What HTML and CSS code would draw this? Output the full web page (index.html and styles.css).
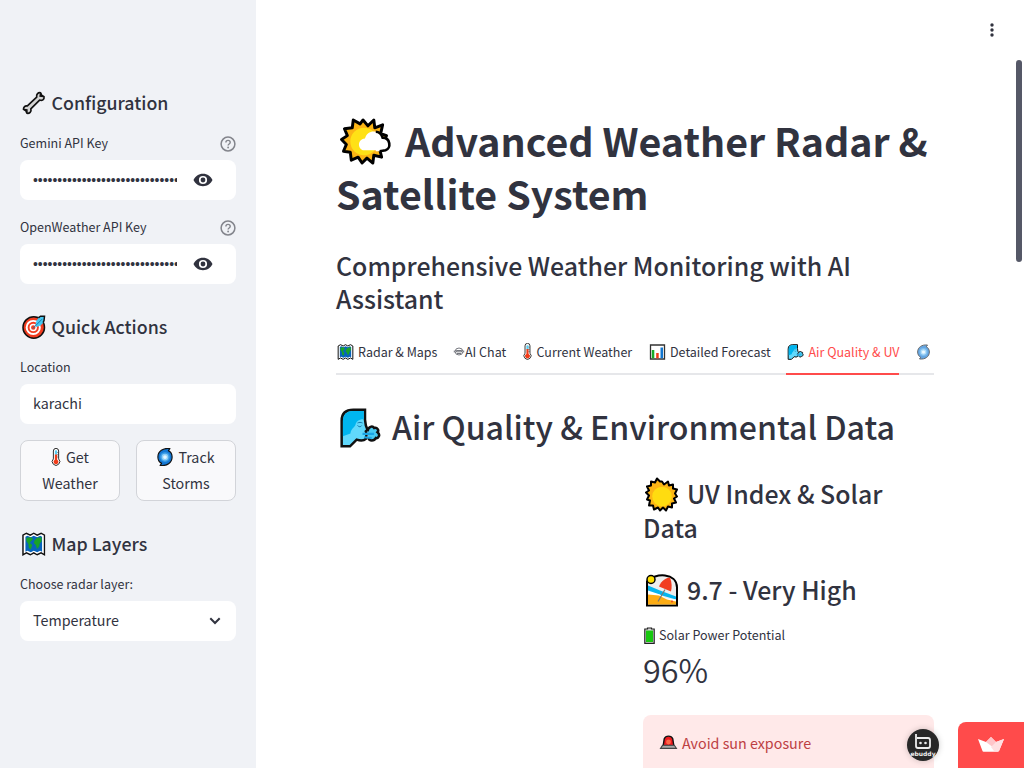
FILE: index.html
```html
<!DOCTYPE html>
<html lang="en">
<head>
<meta charset="utf-8">
<title>Advanced Weather Radar &amp; Satellite System</title>
<link rel="stylesheet" href="styles.css">
</head>
<body>
<svg class="sprite" aria-hidden="true">
  <symbol id="map" viewBox="0 0 48 48">
    <path d="M2 6 9 2l8 4 7-4 7 4 8-4 7 4v40l-7-4-8 4-7-4-7 4-8-4-7 4Z" fill="#fff" stroke="#111" stroke-width="3"/>
    <path d="m7 9 4-2 7 3 6-3 7 3 6-3 4 2v31l-4-2-6 3-7-3-6 3-7-3-4 2Z" fill="#0864bc"/>
    <path d="m9 11 9-1 5 4-4 4-3 4 5 4-3 9-4-3-1-8-4-6ZM26 16l5-5 9-1v9l-4 4-1 6-4 5-3-8-4-4Z" fill="#18a329"/>
  </symbol>
  <symbol id="thermo" viewBox="0 0 24 48">
    <path d="M5 8a7 7 0 0 1 14 0v21a10 10 0 1 1-14 0Z" fill="#fff" stroke="#222" stroke-width="2.500"/>
    <path d="M9 9a3 3 0 0 1 6 0v9H9Z" fill="#5bcdf0"/>
    <path d="M9 17h6v14a6.500 6.500 0 1 1-6 0Z" fill="#f03a17"/>
    <path d="M18 12h-3m3 6h-3m3 6h-3" stroke="#111" stroke-width="1.200"/>
  </symbol>
  <symbol id="cyclone" viewBox="3 0 42 48">
    <path d="M37 1.500C19-1 5 9 5 24c0 8 4 14 10 17l-4 5.500C29 49 43 39 43 24c0-8-4-14-10-17Z" fill="#1478d4" stroke="#111" stroke-width="3" stroke-linejoin="round"/>
    <circle cx="24" cy="24" r="13" fill="#3c9de6"/><circle cx="24" cy="24" r="9" fill="#8fd0f7"/><circle cx="24" cy="24" r="5" fill="#e6f7ff"/>
  </symbol>
  <symbol id="wind" viewBox="0 0 48 48">
    <path d="M2 46V15C2 6 7 2 16 2h14v12l1 7 2 5-2 2 1 3-1 6c-3 3-8 2-11 1l-8 8Z" fill="#61d9fc" stroke="#111" stroke-width="3"/>
    <path d="M3.500 34V15c0-7 5-11.500 12-11.500h13v10c-7 0-9 3-10 7-2 4-5 4-6 10Z" fill="#00b5ef"/>
    <path d="M33 28c1-6 6-7 8-4 4-1 6 3 4 5 4 3 1 8-2 7-2 4-8 4-9 0" fill="#48cbf2" stroke="#111" stroke-width="3"/>
    <path d="M27 31h14m-12 4 9 1" stroke="#1ba5e5" stroke-width="2.500"/>
    <path d="M21 18c2-1 4-1 6 0m-6 3c2 2 4 2 5 0" fill="none" stroke="#1678ab" stroke-width="1.200"/>
  </symbol>
  <symbol id="eye" viewBox="0 0 20 14">
    <path fill-rule="evenodd" d="M10 .8c4.400 0 7.900 2.600 9.500 6.200-1.600 3.600-5.100 6.200-9.500 6.200S2.100 10.600.5 7C2.100 3.400 5.600.8 10 .8Zm0 2.100a4.100 4.100 0 1 0 0 8.200 4.100 4.100 0 0 0 0-8.200Z" fill="#31333f"/><circle cx="10" cy="7" r="2.400" fill="#31333f"/>
  </symbol>
  <symbol id="help" viewBox="0 0 16 16">
    <circle cx="8" cy="8" r="6.900" fill="none" stroke="#83858c" stroke-width="1.500"/>
    <path d="M5.900 6.500c0-2.800 4.300-2.800 4.300 0 0 1.500-2.100 1.500-2.100 3" fill="none" stroke="#83858c" stroke-width="1.400"/><circle cx="8.100" cy="11.500" r=".9" fill="#83858c"/>
  </symbol>
</svg>
<div class="app">
  <aside class="sidebar">
    <h2 class="side-title"><svg class="side-icon" viewBox="0 0 48 48"><path d="m11 30 19-18c-1-6 3-10 8-9l2 5 5 3c1 6-4 9-9 7L18 36c2 6-3 10-8 9l-2-5-5-3c0-5 3-8 8-7Z" fill="#d4d4d4" stroke="#111" stroke-width="3.400" stroke-linejoin="round"/><path d="m38 4-1 6 7 1M4 37l6 1v6" fill="none" stroke="#111" stroke-width="3"/></svg><span>Configuration</span></h2>
    <div class="field">
      <div class="label"><span>Gemini API Key</span><svg class="help"><use href="#help"/></svg></div>
      <div class="input"><span class="dots">••••••••••••••••••••••••••••••</span><svg class="eye"><use href="#eye"/></svg></div>
    </div>
    <div class="field">
      <div class="label"><span>OpenWeather API Key</span><svg class="help"><use href="#help"/></svg></div>
      <div class="input"><span class="dots">••••••••••••••••••••••••••••••</span><svg class="eye"><use href="#eye"/></svg></div>
    </div>
    <h2 class="side-title later"><svg class="side-icon" viewBox="0 0 48 48"><circle cx="24" cy="25" r="22" fill="#f23d20" stroke="#111" stroke-width="3"/><circle cx="23" cy="25" r="13.500" fill="none" stroke="#fff" stroke-width="4"/><circle cx="23" cy="25" r="6" fill="#f23d20" stroke="#fff" stroke-width="3"/><path d="m27 21 3-11 5-6 11-1-1 11-7 7-9 3Z" fill="#45c8f2"/><path d="m22 27 19-19" stroke="#137bae" stroke-width="2"/><path d="m34 5 4-3h8l-1 9-2 4" fill="none" stroke="#111" stroke-width="3"/></svg><span>Quick Actions</span></h2>
    <div class="field">
      <div class="label"><span>Location</span></div>
      <div class="input"><span class="value">karachi</span></div>
    </div>
    <div class="actions">
      <button class="action"><span class="action-line"><svg class="thermo-btn"><use href="#thermo"/></svg>Get</span><span>Weather</span></button>
      <button class="action"><span class="action-line"><svg class="cyclone-btn"><use href="#cyclone"/></svg>Track</span><span>Storms</span></button>
    </div>
    <h2 class="side-title later"><svg class="side-icon"><use href="#map"/></svg><span>Map Layers</span></h2>
    <div class="field">
      <div class="label"><span>Choose radar layer:</span></div>
      <div class="input"><span class="value">Temperature</span><svg class="chevron" viewBox="0 0 12 8"><path d="m1.300 1.300 4.700 4.700 4.700-4.700" fill="none" stroke="#31333f" stroke-width="2"/></svg></div>
    </div>
  </aside>
  <main class="main">
    <h1 class="title"><svg class="sun-cloud" viewBox="0 0 50 48"><path d="m23 2 5 6 6-6 1 8 8-3-2 9 6 2-3 6 4 6-8 2 2 8-8-2-1 8-6-5-5 5-4-6-7 3-1-8-7-1 3-7-5-5 6-4-3-7 8-1 1-8 7 4Z" fill="#fcb515" stroke="#000" stroke-width="3" stroke-linejoin="round"/><path d="M36 14c5 0 7 3 8 6 7 0 10 12 0 14h-8Z" fill="#fff"/><circle cx="24" cy="24" r="14" fill="#ffe116"/><path d="M24 33c-6 0-8-11 1-12 2-9 14-10 17-1 9-1 10 13 2 13Z" fill="#fff"/><path d="M36 14c4 0 6 3 7 6 8 0 9 11 3 13l-6 1" fill="none" stroke="#000" stroke-width="2.700"/></svg><span>Advanced Weather Radar &amp;</span><br><span>Satellite System</span></h1>
    <h3 class="subtitle"><span>Comprehensive Weather Monitoring with AI</span><br>Assistant</h3>
    <nav class="tabs">
      <a class="tab tab-radar"><svg class="tab-icon"><use href="#map"/></svg><span>Radar &amp; Maps</span></a>
      <a class="tab tab-chat"><svg class="chat-icon" viewBox="0 0 10 9"><ellipse cx="5" cy="4.500" rx="3.800" ry="3.500" fill="none" stroke="#52545d" stroke-width=".8"/><path d="M.3 3.500v2m9.400-2v2M2.500 3.500h5v1.300h-5ZM3 6.500h4" fill="none" stroke="#52545d" stroke-width=".8"/></svg><span>AI Chat</span></a>
      <a class="tab tab-current"><svg class="tab-thermo"><use href="#thermo"/></svg><span>Current Weather</span></a>
      <a class="tab tab-forecast"><svg class="tab-icon" viewBox="0 0 16 16"><path d="M1 1h14v14H1Z" fill="#fff" stroke="#333" stroke-width="1.300"/><path d="M2.300 6h2.500v8.300H2.300Z" fill="#18ab28"/><path d="M6.700 9h2.500v5.300H6.700Z" fill="#f03a17"/><path d="M11 3.500h2.500v10.800H11Z" fill="#1277d1"/></svg><span>Detailed Forecast</span></a>
      <a class="tab tab-air active"><svg class="tab-icon"><use href="#wind"/></svg><span>Air Quality &amp; UV</span></a>
      <a class="tab tab-storm"><svg class="tab-storm-icon"><use href="#cyclone"/></svg></a>
    </nav>
    <h2 class="section"><svg class="section-icon"><use href="#wind"/></svg><span>Air Quality &amp; Environmental Data</span></h2>
    <section class="uv">
      <h3 class="uv-title"><svg class="uv-icon sun" viewBox="0 0 32 32"><path d="m16 1 2 3 4-3 1 4 4-1v4l4 1-2 4 2 3-3 2 2 4-4 1v4l-4-1-2 4-3-3-3 3-2-3-4 2-1-4-4 0 1-5-3-1 2-4-3-3 3-2-2-4 4-1 0-4 4 1 2-4 3 3Z" fill="#fcb515" stroke="#000" stroke-width="2" stroke-linejoin="round"/><circle cx="16" cy="16" r="9.800" fill="#ffdc10"/></svg><span>UV Index &amp; Solar</span><br>Data</h3>
      <h3 class="uv-title score"><svg class="uv-icon" viewBox="0 0 32 32"><path d="M1 31V7C9-2 31-2 31 13v18Z" fill="#eee" stroke="#000" stroke-width="2"/><path d="m2 11 12 5 16 6v3L2 17Z" fill="#05b5ef"/><path d="m2 16 12 4 6 4 10 1v3H2Z" fill="#fff"/><path d="m2 20 11 1 8 4 9 2v3H2Z" fill="#fcac14"/><path d="m13 12c2-6 8-9 11-9 2 5 2 10 1 14Z" fill="#f13d21"/><path d="m19 15-7 12" stroke="#777" stroke-width="1.200"/><circle cx="5" cy="5" r="4" fill="#ffe000" stroke="#000" stroke-width="1.500"/><circle cx="26" cy="27" r="1" fill="#ef4323"/></svg><span>9.7 - Very High</span></h3>
      <div class="metric-label"><svg class="battery" viewBox="0 0 11 17"><path d="M3.500 1h4v1h2.700v14.300H.8V2h2.700Z" fill="#d9d9d9" stroke="#222" stroke-width="1.200"/><path d="M2 3.500h7V15H2Z" fill="#18c80f"/></svg><span>Solar Power Potential</span></div>
      <div class="metric">96%</div>
      <div class="alert"><svg class="siren" viewBox="0 0 16 14"><path d="M3 10 4 3.500Q5 1 8 1t4 2.500l1 6.500Z" fill="#ee1b20" stroke="#111" stroke-width="1.300"/><path d="m2.500 9.500-2 3h15l-2-3Z" fill="#aaa" stroke="#444"/><circle cx="8" cy="6.500" r="2.300" fill="#ff6848"/></svg><span>Avoid sun exposure</span></div>
    </section>
  </main>
  <svg class="menu" viewBox="0 0 4 14"><circle cx="2" cy="2" r="1.700"/><circle cx="2" cy="7" r="1.700"/><circle cx="2" cy="12" r="1.700"/></svg>
  <div class="scroll-thumb"></div>
  <div class="avatar"><svg class="avatar-face" viewBox="0 0 20 16"><path d="M3 .5v12q0 2 2 2h10q2 0 2-2v-6q0-2-2-2H4" fill="none" stroke="#eee" stroke-width="1.800"/><circle cx="7.500" cy="9.500" r="1.300" fill="#eee"/><circle cx="12.500" cy="9.500" r="1.300" fill="#eee"/></svg><span>ebuddy</span></div>
  <div class="host"><svg class="crown" viewBox="0 0 26 15"><path d="m0 2 8 3 5-5 5 5 8-3-5 12q-.3.700-1 .7H5.500q-.8 0-1-.7Z" fill="#fff"/><path d="m8 5 5-5 5 5-2 6Z" fill="#ffc5c9"/><path d="m18 5 8-3-5 12H16l-3-4Z" fill="#ffdfe1"/></svg></div>
</div>
</body>
</html>
```
FILE: styles.css
```css
* { box-sizing: border-box; }
body { margin: 0; font-family: "Noto Sans CJK SC", "Noto Sans", sans-serif; color: #31333f; background: #fff; }
.sprite { display: none; }
svg { flex: none; overflow: visible; }
h1, h2, h3 { margin: 0; font-weight: 500; }
span { white-space: nowrap; }
.app { position: relative; display: flex; width: 1024px; height: 768px; overflow: hidden; }
.sidebar { width: 256px; flex: none; background: #f0f2f6; padding: 91px 20px 0; }
.side-title { display: flex; align-items: center; gap: 6px; height: 24px; margin-bottom: 17px; padding-left: 2px; font-size: 17.8px; line-height: 24px; }
.side-title span { padding-bottom: 2px; }
.side-title.later { margin-top: 31px; }
.side-icon { width: 23.5px; height: 24px; }
.field { margin-bottom: 16px; }
.label { display: flex; justify-content: space-between; align-items: center; height: 22px; margin-bottom: 6px; font-size: 12.53px; line-height: 22px; }
.help { width: 16px; height: 16px; margin-top: 2px; }
.input { display: flex; align-items: center; justify-content: space-between; height: 40px; padding: 0 15px 0 13px; border-radius: 8px; background: #fff; font-size: 14.3px; line-height: 24px; }
.value { padding-bottom: 2px; }
.dots { width: 144px; overflow: hidden; font-family: "Liberation Sans", sans-serif; font-size: 13.9px; }
.eye { width: 20px; height: 14px; margin-right: 8px; }
.chevron { width: 12px; height: 8px; }
.actions { display: flex; gap: 16px; }
.action { display: flex; flex-direction: column; align-items: center; justify-content: center; width: 100px; height: 61px; padding: 0 0 2px; border: 1px solid #d2d4d9; border-radius: 8px; background: #f9f9fb; color: inherit; font: 14.3px/26px "Noto Sans CJK SC", sans-serif; }
.action-line { display: flex; align-items: center; gap: 5px; }
.thermo-btn { width: 10px; height: 18px; }
.cyclone-btn { width: 16px; height: 18px; margin-top: 1px; }
.main { width: 598px; margin-left: 80px; padding-top: 113px; }
.title { height: 109px; font-size: 39.36px; line-height: 53px; font-weight: 700; }
.sun-cloud { width: 50px; height: 47px; margin: 0 15px 0 4px; vertical-align: -8px; }
.subtitle { height: 67px; margin-top: 27px; font-size: 24.9px; line-height: 33px; }
.tabs { display: flex; height: 40px; margin-top: 19px; border-bottom: 2px solid #e6e7ea; font-size: 12.5px; line-height: 32px; }
.tab { display: flex; align-items: center; height: 40px; gap: 5px; flex: none; margin-right: 16px; padding-bottom: 7px; }
.tab-radar { width: 102px; padding-left: 1px; gap: 4px; }
.tab-chat { width: 53px; gap: 1px; }
.tab-current { width: 110px; gap: 4.5px; }
.tab-forecast { width: 121px; gap: 4px; }
.tab-air { width: 113px; padding-left: 1px; gap: 4.5px; padding-bottom: 5px; }
.tab-storm { padding-left: 2px; }
.active { color: #ff4b4b; border-bottom: 2px solid #ff4b4b; }
.tab-icon { width: 17px; height: 16px; }
.chat-icon { width: 10px; height: 9px; }
.tab-thermo { width: 9px; height: 17px; }
.tab-storm-icon { width: 13px; height: 16px; opacity: .65; }
.section { display: flex; align-items: center; gap: 11px; height: 44px; margin-top: 31px; padding-left: 3px; font-size: 32.1px; line-height: 44px; }
.section span { padding-bottom: 4px; }
.section-icon { width: 42px; height: 40px; }
.uv { width: 291px; margin: 26px 0 0 307px; }
.uv-title { font-size: 24.9px; line-height: 34px; }
.uv-icon { width: 32px; height: 33px; margin: -6px 9px -6px 3px; vertical-align: -1px; }
.uv-icon.sun { vertical-align: -3px; margin-bottom: -6px; }
.score { margin-top: 28px; }
.metric-label { display: flex; align-items: center; gap: 4px; height: 20px; margin-top: 19px; padding-left: 1px; font-size: 12.55px; line-height: 20px; }
.battery { width: 11px; height: 17px; }
.metric { height: 50px; font-size: 32.4px; line-height: 48px; font-weight: 350; }
.alert { display: flex; align-items: center; gap: 5px; height: 80px; margin-top: 20px; padding: 0 17px 25px; border-radius: 8px; background: #ffe9e9; color: #bd4043; font-size: 14.3px; line-height: 26px; }
.siren { width: 17px; height: 15px; }
.menu { position: absolute; left: 990px; top: 23px; width: 4px; height: 14px; fill: #31333f; }
.scroll-thumb { position: absolute; right: 2px; top: 60px; width: 6px; height: 202px; border-radius: 3px; background: #555867; }
.avatar { position: absolute; left: 907px; top: 729px; width: 32px; height: 32px; padding-top: 4px; border-radius: 50%; background: #282828; box-shadow: 0 0 6px #0003; color: #eee; text-align: center; font: bold 6px/6px "DejaVu Sans", sans-serif; }
.avatar-face { display: block; width: 20px; height: 17px; margin: 0 auto 1px; }
.avatar span { display: block; }
.host { position: absolute; left: 958px; top: 722px; width: 66px; height: 46px; padding: 15px 0 0 20px; border-radius: 8px 0 0; background: #ff4b4b; }
.crown { display: block; width: 26px; height: 15px; }
```
